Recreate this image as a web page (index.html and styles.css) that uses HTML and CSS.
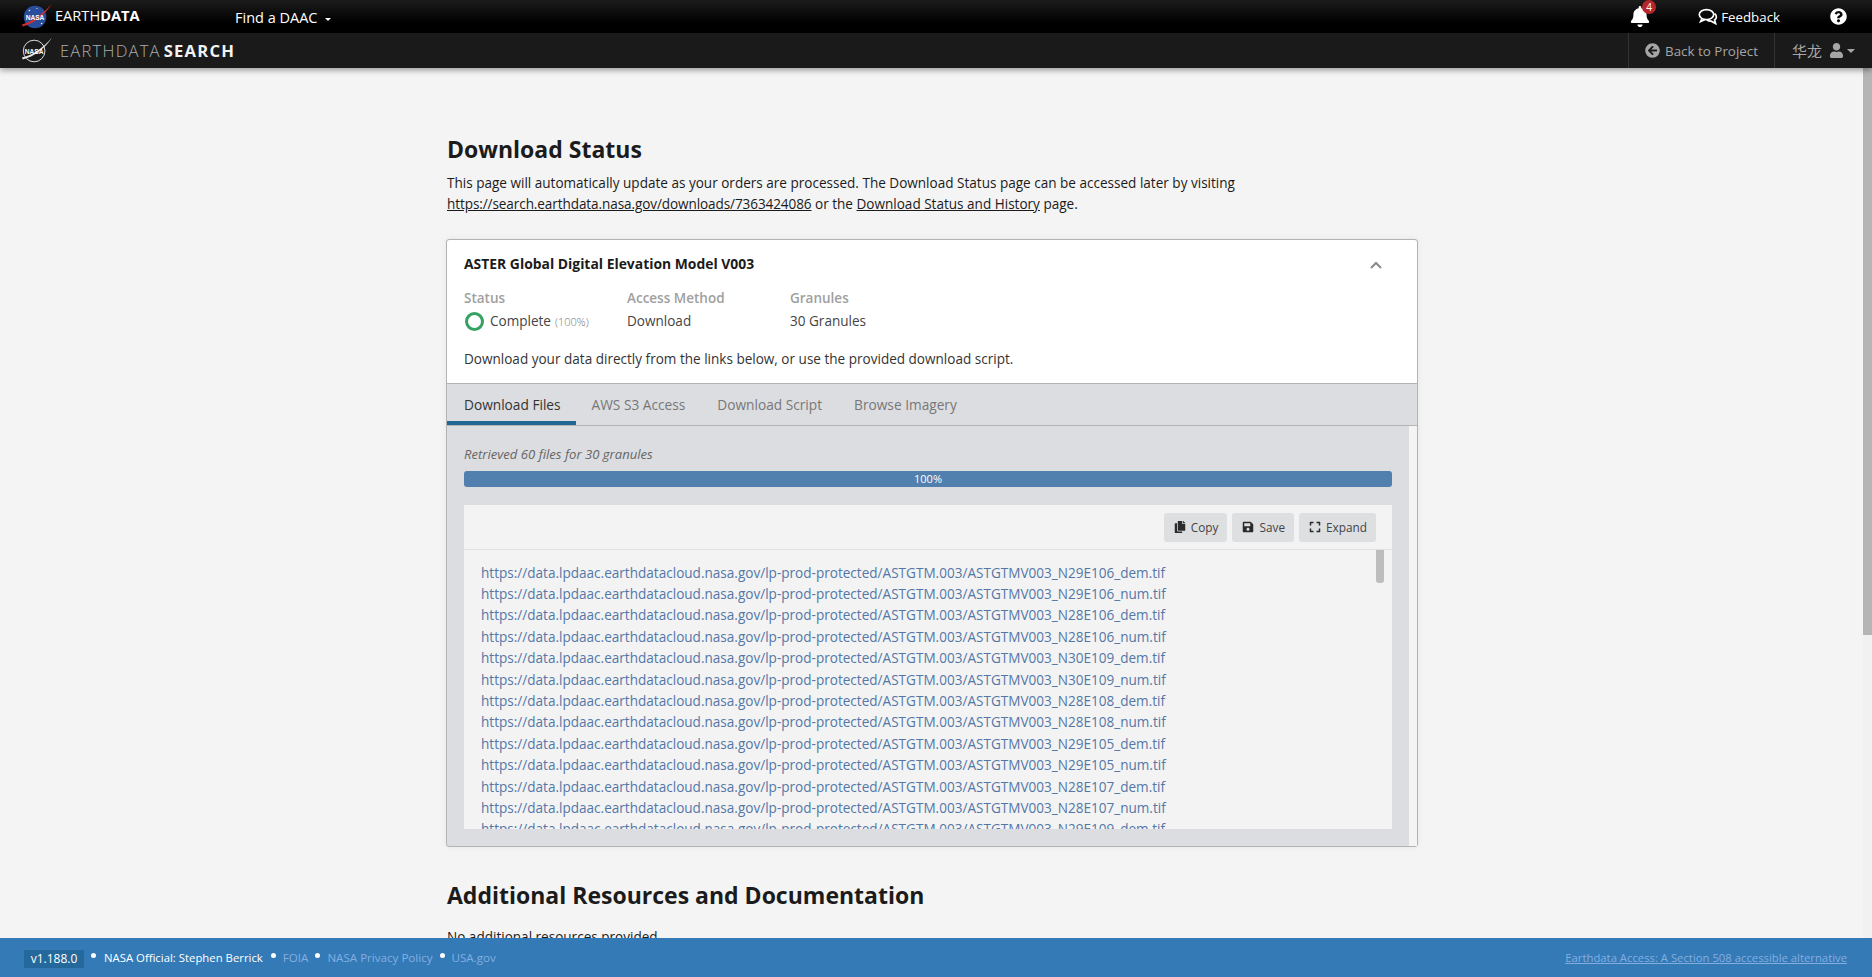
FILE: index.html
```html
<!DOCTYPE html>
<html lang="en">
<head>
    <meta charset="UTF-8">
    <meta name="viewport" content="width=device-width, initial-scale=1.0">
    <title>Earthdata Search - Download Status</title>
    <link rel="stylesheet" href="styles.css">
</head>
<body>
    <header class="topbar">
        <a class="brand">
            <svg class="nasa-logo" viewBox="0 0 40 34" aria-hidden="true">
                <circle cx="19" cy="17" r="12" fill="#2a4d9b"/>
                <path d="M5 25 C16 22 27 14 37 3 C29 15 18 24 6 27 Z" fill="#d03030"/>
                <circle cx="13" cy="10" r="0.8" fill="#fff"/>
                <circle cx="26" cy="24" r="0.8" fill="#fff"/>
                <circle cx="21" cy="8" r="0.6" fill="#fff"/>
                <text x="19" y="20" class="nasa-word">NASA</text>
            </svg>
            <span class="brand-name">EARTH<b>DATA</b></span>
        </a>
        <a class="daac">Find a DAAC <i class="daac-caret"></i></a>
        <div class="topbar-right">
            <a class="bell">
                <svg class="bell-icon" viewBox="0 0 448 512"><path d="M224 512c35.32 0 63.97-28.65 63.97-64H160.03c0 35.35 28.65 64 63.97 64zm215.39-149.71c-19.32-20.76-55.47-51.99-55.47-154.29 0-77.7-54.48-139.9-127.94-155.16V32c0-17.67-14.32-32-31.98-32s-31.98 14.33-31.98 32v20.84C118.56 68.1 64.08 130.3 64.08 208c0 102.3-36.15 133.53-55.47 154.29-6 6.45-8.66 14.16-8.61 21.71.11 16.4 12.98 32 32.1 32h383.8c19.12 0 32-15.6 32.1-32 .05-7.55-2.61-15.27-8.61-21.71z"/></svg>
                <span class="bell-count">4</span>
            </a>
            <a class="feedback">
                <svg class="feedback-icon" viewBox="0 0 20 18" fill="none" stroke="#fff" stroke-width="1.7"><ellipse cx="8.5" cy="6.6" rx="7.2" ry="5"/><path d="M4 10.5 L2.6 13.6 L7.2 11.5"/><path d="M16.5 5.5 C19 7.5 19 10.5 16.6 12 L17.6 15.6 L13.2 13.2 C11.5 13.2 10 12.8 9 12"/></svg>
                Feedback
            </a>
            <svg class="help-icon" viewBox="0 0 512 512"><path d="M504 256c0 136.997-111.043 248-248 248S8 392.997 8 256C8 119.083 119.043 8 256 8s248 111.083 248 248zM262.655 90c-54.497 0-89.255 22.957-116.549 63.758-3.536 5.286-2.353 12.415 2.715 16.258l34.699 26.31c5.205 3.947 12.621 3.008 16.665-2.122 17.864-22.658 30.113-35.797 57.303-35.797 20.429 0 45.698 13.148 45.698 32.958 0 14.976-12.363 22.667-32.534 33.976C247.128 238.528 216 254.941 216 296v4c0 6.627 5.373 12 12 12h56c6.627 0 12-5.373 12-12v-1.333c0-28.462 83.186-29.647 83.186-106.667 0-58.002-60.165-102-116.531-102zM256 338c-25.365 0-46 20.635-46 46 0 25.364 20.635 46 46 46s46-20.636 46-46c0-25.365-20.635-46-46-46z"/></svg>
        </div>
    </header>

    <nav class="appbar">
        <a class="app-brand">
            <svg class="nasa-outline" viewBox="0 0 40 34" aria-hidden="true" fill="none" stroke="#e8e8e8">
                <circle cx="18" cy="17" r="11.5" stroke-width="1"/>
                <path d="M5 24 C16 22 27 14 37 3 C29 15 18 23 6 26 Z" fill="#e8e8e8" stroke="none"/>
                <text x="18" y="20" class="nasa-word">NASA</text>
            </svg>
            <span class="app-name">EARTHDATA<b>SEARCH</b></span>
        </a>
        <div class="appbar-right">
            <a class="back-link">
                <svg class="back-icon" viewBox="0 0 512 512"><path d="M256 504C119 504 8 393 8 256S119 8 256 8s248 111 248 248-111 248-248 248zm28.9-143.6L209.4 288H392c13.3 0 24-10.7 24-24v-16c0-13.3-10.7-24-24-24H209.4l75.5-72.4c9.7-9.3 9.9-24.8.4-34.3l-11-10.9c-9.4-9.4-24.6-9.4-33.9 0L107.7 239c-9.4 9.4-9.4 24.6 0 33.9l132.7 132.7c9.4 9.4 24.6 9.4 33.9 0l11-10.9c9.5-9.5 9.3-25-.4-34.3z"/></svg>
                Back to Project
            </a>
            <a class="user-menu">
                华龙
                <svg class="user-icon" viewBox="0 0 448 512"><path d="M224 256c70.7 0 128-57.3 128-128S294.7 0 224 0 96 57.3 96 128s57.3 128 128 128zm89.6 32h-16.7c-22.2 10.2-46.9 16-72.9 16s-50.6-5.8-72.9-16h-16.7C60.2 288 0 348.2 0 422.4V464c0 26.5 21.5 48 48 48h352c26.5 0 48-21.5 48-48v-41.6c0-74.2-60.2-134.4-134.4-134.4z"/></svg>
                <i class="user-caret"></i>
            </a>
        </div>
    </nav>

    <div class="page">
        <main class="content">
            <h1>Download Status</h1>
            <p class="intro">This page will automatically update as your orders are processed. The Download Status page can be accessed later by visiting<br><a class="page-url">https://search.earthdata.nasa.gov/downloads/7363424086</a> or the <a>Download Status and History</a> page.</p>

            <section class="order">
                <div class="order-head">
                    <div class="order-title">
                        <h2>ASTER Global Digital Elevation Model V003</h2>
                        <svg class="chevron" viewBox="0 0 12 8" fill="none" stroke="#8a8a8a" stroke-width="2"><path d="M1 7 L6 2 L11 7"/></svg>
                    </div>
                    <div class="order-meta">
                        <div class="meta-col">
                            <span class="meta-label">Status</span>
                            <span class="meta-value"><i class="status-ring"></i>Complete <small>(100%)</small></span>
                        </div>
                        <div class="meta-col">
                            <span class="meta-label">Access Method</span>
                            <span class="meta-value">Download</span>
                        </div>
                        <div class="meta-col">
                            <span class="meta-label">Granules</span>
                            <span class="meta-value">30 Granules</span>
                        </div>
                    </div>
                    <p class="order-note">Download your data directly from the links below, or use the provided download script.</p>
                </div>

                <div class="tabs">
                    <a class="tab active">Download Files</a>
                    <a class="tab">AWS S3 Access</a>
                    <a class="tab">Download Script</a>
                    <a class="tab">Browse Imagery</a>
                </div>

                <div class="tab-body">
                    <div class="tab-inner">
                        <p class="retrieved">Retrieved 60 files for 30 granules</p>
                        <div class="progress">100%</div>
                        <div class="links-panel">
                            <div class="links-toolbar">
                                <button class="tool-btn">
                                    <svg viewBox="0 0 448 512"><path d="M320 448v40c0 13.255-10.745 24-24 24H24c-13.255 0-24-10.745-24-24V120c0-13.255 10.745-24 24-24h72v296c0 30.879 25.121 56 56 56h168zm0-344V0H152c-13.255 0-24 10.745-24 24v368c0 13.255 10.745 24 24 24h272c13.255 0 24-10.745 24-24V128H344c-13.2 0-24-10.8-24-24zm120.971-31.029L375.029 7.029A24 24 0 0 0 358.059 0H352v96h96v-6.059a24 24 0 0 0-7.029-16.97z"/></svg>
                                    Copy
                                </button>
                                <button class="tool-btn">
                                    <svg viewBox="0 0 448 512"><path d="M433.941 129.941l-83.882-83.882A48 48 0 0 0 316.118 32H48C21.49 32 0 53.49 0 80v352c0 26.51 21.49 48 48 48h352c26.51 0 48-21.49 48-48V163.882a48 48 0 0 0-14.059-33.941zM224 416c-35.346 0-64-28.654-64-64 0-35.346 28.654-64 64-64s64 28.654 64 64c0 35.346-28.654 64-64 64zm96-304.52V212c0 6.627-5.373 12-12 12H76c-6.627 0-12-5.373-12-12V108c0-6.627 5.373-12 12-12h228.52c3.183 0 6.235 1.264 8.485 3.515l3.48 3.48A11.996 11.996 0 0 1 320 111.48z"/></svg>
                                    Save
                                </button>
                                <button class="tool-btn">
                                    <svg viewBox="0 0 448 512"><path d="M0 180V56c0-13.3 10.7-24 24-24h124c6.6 0 12 5.4 12 12v40c0 6.6-5.4 12-12 12H64v84c0 6.6-5.4 12-12 12H12c-6.6 0-12-5.4-12-12zM288 44v40c0 6.6 5.4 12 12 12h84v84c0 6.6 5.4 12 12 12h40c6.6 0 12-5.4 12-12V56c0-13.3-10.7-24-24-24H300c-6.6 0-12 5.4-12 12zm148 276h-40c-6.6 0-12 5.4-12 12v84h-84c-6.6 0-12 5.4-12 12v40c0 6.6 5.4 12 12 12h124c13.3 0 24-10.7 24-24V332c0-6.6-5.4-12-12-12zM160 468v-40c0-6.6-5.4-12-12-12H64v-84c0-6.6-5.4-12-12-12H12c-6.6 0-12 5.4-12 12v124c0 13.3 10.7 24 24 24h124c6.6 0 12-5.4 12-12z"/></svg>
                                    Expand
                                </button>
                            </div>
                            <div class="links-view">
                                <ul class="links-list">
                                    <li>https://data.lpdaac.earthdatacloud.nasa.gov/lp-prod-protected/ASTGTM.003/ASTGTMV003_N29E106_dem.tif</li>
                                    <li>https://data.lpdaac.earthdatacloud.nasa.gov/lp-prod-protected/ASTGTM.003/ASTGTMV003_N29E106_num.tif</li>
                                    <li>https://data.lpdaac.earthdatacloud.nasa.gov/lp-prod-protected/ASTGTM.003/ASTGTMV003_N28E106_dem.tif</li>
                                    <li>https://data.lpdaac.earthdatacloud.nasa.gov/lp-prod-protected/ASTGTM.003/ASTGTMV003_N28E106_num.tif</li>
                                    <li>https://data.lpdaac.earthdatacloud.nasa.gov/lp-prod-protected/ASTGTM.003/ASTGTMV003_N30E109_dem.tif</li>
                                    <li>https://data.lpdaac.earthdatacloud.nasa.gov/lp-prod-protected/ASTGTM.003/ASTGTMV003_N30E109_num.tif</li>
                                    <li>https://data.lpdaac.earthdatacloud.nasa.gov/lp-prod-protected/ASTGTM.003/ASTGTMV003_N28E108_dem.tif</li>
                                    <li>https://data.lpdaac.earthdatacloud.nasa.gov/lp-prod-protected/ASTGTM.003/ASTGTMV003_N28E108_num.tif</li>
                                    <li>https://data.lpdaac.earthdatacloud.nasa.gov/lp-prod-protected/ASTGTM.003/ASTGTMV003_N29E105_dem.tif</li>
                                    <li>https://data.lpdaac.earthdatacloud.nasa.gov/lp-prod-protected/ASTGTM.003/ASTGTMV003_N29E105_num.tif</li>
                                    <li>https://data.lpdaac.earthdatacloud.nasa.gov/lp-prod-protected/ASTGTM.003/ASTGTMV003_N28E107_dem.tif</li>
                                    <li>https://data.lpdaac.earthdatacloud.nasa.gov/lp-prod-protected/ASTGTM.003/ASTGTMV003_N28E107_num.tif</li>
                                    <li>https://data.lpdaac.earthdatacloud.nasa.gov/lp-prod-protected/ASTGTM.003/ASTGTMV003_N29E109_dem.tif</li>
                                </ul>
                                <div class="links-thumb"></div>
                            </div>
                        </div>
                    </div>
                </div>
            </section>

            <h1 class="resources-title">Additional Resources and Documentation</h1>
            <p class="resources-text">No additional resources provided</p>
        </main>
        <div class="page-scroll"><div class="page-thumb"></div></div>
    </div>

    <footer class="footer">
        <span class="version">v1.188.0</span>
        <span class="dot"></span>
        <span class="official">NASA Official: Stephen Berrick</span>
        <span class="dot"></span>
        <a>FOIA</a>
        <span class="dot"></span>
        <a>NASA Privacy Policy</a>
        <span class="dot"></span>
        <a>USA.gov</a>
        <a class="access-link">Earthdata Access: A Section 508 accessible alternative</a>
    </footer>
</body>
</html>
```

FILE: styles.css
```css
html, body {
    height: 100%;
}
body {
    margin: 0;
    display: flex;
    flex-direction: column;
    height: 100vh;
    overflow: hidden;
    font-family: 'Open Sans', 'Noto Sans CJK SC', sans-serif;
    font-size: 13.55px;
    color: #1b1b1b;
    background-color: #f4f4f4;
}
a {
    color: inherit;
}

/* top bars */
.topbar {
    flex: none;
    height: 33px;
    display: flex;
    align-items: center;
    background: linear-gradient(#1c1c1c, #000 70%);
    color: #fff;
}
.brand {
    display: flex;
    align-items: center;
    width: 218px;
    padding-left: 17px;
}
.nasa-logo {
    width: 38px;
    height: 32px;
}
.nasa-word {
    font-family: 'Liberation Sans', sans-serif;
    font-size: 7px;
    font-weight: bold;
    fill: #fff;
    stroke: none;
    text-anchor: middle;
}
.brand-name {
    font-size: 14.6px;
    line-height: 1;
    margin-top: -2px;
}
.brand-name b {
    font-weight: 700;
}
.daac {
    font-size: 14.5px;
    margin-top: 2px;
}
.daac-caret {
    display: inline-block;
    margin-left: 4px;
    vertical-align: 2px;
    border: 3px solid transparent;
    border-top-color: #fff;
    border-bottom: 0;
}
.topbar-right {
    margin-left: auto;
    display: flex;
    align-items: center;
}
.bell {
    position: relative;
    display: flex;
    margin-right: 47px;
}
.bell-icon {
    width: 20px;
    height: 21px;
    fill: #fff;
}
.bell-count {
    position: absolute;
    top: -6px;
    left: 12px;
    width: 14px;
    height: 14px;
    border-radius: 50%;
    background-color: #b5272c;
    font-size: 10px;
    line-height: 14px;
    text-align: center;
}
.feedback {
    display: flex;
    align-items: center;
    font-size: 13.3px;
    margin-right: 50px;
}
.feedback-icon {
    width: 22px;
    height: 18px;
    margin-right: 2px;
}
.help-icon {
    width: 17px;
    height: 17px;
    fill: #fff;
    margin-right: 25px;
}

.appbar {
    flex: none;
    height: 35px;
    display: flex;
    align-items: stretch;
    background-color: #1a1a1a;
    box-shadow: 0 2px 6px rgba(0, 0, 0, 0.4);
    position: relative;
    z-index: 2;
}
.app-brand {
    display: flex;
    align-items: center;
    padding-left: 17px;
}
.nasa-outline {
    width: 38px;
    height: 32px;
    margin-right: 5px;
}
.app-name {
    font-size: 16.6px;
    letter-spacing: 1.2px;
    color: #a8aeae;
    font-weight: 300;
}
.app-name b {
    margin-left: 3px;
    color: #f2f2f2;
    font-weight: 700;
}
.appbar-right {
    margin-left: auto;
    display: flex;
    color: #a6a6a6;
    font-size: 13.4px;
}
.back-link {
    display: flex;
    align-items: center;
    box-sizing: border-box;
    width: 147px;
    padding-left: 16px;
    border-left: 1px solid #333;
    border-right: 1px solid #333;
}
.back-icon {
    width: 15px;
    height: 15px;
    fill: #a6a6a6;
    margin-right: 5px;
}
.user-menu {
    display: flex;
    align-items: center;
    width: 65px;
    padding-left: 17px;
    margin-right: 15px;
    font-size: 15px;
}
.user-icon {
    flex: none;
    width: 13px;
    height: 15px;
    fill: #a6a6a6;
    margin: 0 4px 0 8px;
}
.user-caret {
    flex: none;
    border: 4px solid transparent;
    border-top-color: #a6a6a6;
    border-bottom: 0;
}

/* page */
.page {
    flex: 1;
    min-height: 0;
    display: flex;
    overflow: hidden;
}
.content {
    flex: 1;
    min-width: 0;
    padding: 68px 0 0 447px;
}
h1 {
    margin: 0;
    font-size: 23px;
    line-height: 1.2;
    font-weight: 700;
    color: #1b1b1b;
}
.intro {
    margin: 9px 0 0;
    line-height: 21px;
}
.intro a {
    text-decoration: underline;
}
.intro .page-url {
    letter-spacing: -0.09px;
}
.page-scroll {
    flex: none;
    width: 9px;
    background-color: #f1f1f1;
}
.page-thumb {
    height: 567px;
    background-color: #b5b5b5;
}

/* order card */
.order {
    width: 970px;
    margin: 24px 0 0 -1px;
    border: 1px solid #b3b3b3;
    border-radius: 3px;
    box-shadow: 0 0 6px rgba(0, 0, 0, 0.06);
    background-color: #dcdde0;
}
.order-head {
    height: 143px;
    padding: 0 17px;
    background-color: #fff;
    border-radius: 3px 3px 0 0;
    border-bottom: 1px solid #b3b3b3;
}
.order-title {
    display: flex;
    justify-content: space-between;
    align-items: center;
    padding: 14px 18px 0 0;
}
.order-title h2 {
    margin: 0;
    font-size: 13.9px;
    line-height: 20px;
    font-weight: 700;
}
.chevron {
    width: 12px;
    height: 8px;
    margin-top: 3px;
}
.order-meta {
    display: flex;
    margin-top: 14px;
}
.meta-col {
    display: flex;
    flex-direction: column;
    width: 163px;
}
.meta-label {
    font-size: 13.5px;
    line-height: 21px;
    font-weight: 600;
    color: #a0a0a0;
}
.meta-value {
    display: flex;
    align-items: center;
    height: 25px;
    color: #444;
}
.meta-value small {
    font-size: 11px;
    font-weight: 300;
    color: #777;
    margin-left: 4px;
}
.status-ring {
    width: 13px;
    height: 13px;
    margin: 0 6px 0 1px;
    border: 3px solid #34a263;
    border-radius: 50%;
}
.order-note {
    margin: 15px 0 0;
    line-height: 20px;
    color: #333;
}

.tabs {
    display: flex;
    height: 41px;
    border-bottom: 1px solid #b3b3b3;
}
.tab {
    box-sizing: border-box;
    height: 41px;
    padding: 11px 16px 0;
    font-size: 13.7px;
    color: #777;
}
.tab.active {
    padding-left: 17px;
    padding-right: 15px;
    color: #333;
    border-bottom: 4px solid #206793;
}
.tab-body {
    border-right: 8px solid #f4f4f4;
    padding: 18px 16px 17px 17px;
    overflow: hidden;
}
.tab-inner {
    margin-right: 1px;
}
.retrieved {
    margin: 0;
    font-size: 13.1px;
    line-height: 20px;
    font-style: italic;
    color: #666;
}
.progress {
    margin-top: 7px;
    height: 16px;
    border-radius: 3px;
    background-color: #5280ae;
    color: #fff;
    font-size: 11px;
    line-height: 16px;
    text-align: center;
}
.links-panel {
    margin-top: 18px;
    height: 324px;
    overflow: hidden;
    background-color: #f3f3f3;
}
.links-toolbar {
    display: flex;
    justify-content: flex-end;
    gap: 5px;
    height: 45px;
    padding: 8px 16px 0 0;
    box-sizing: border-box;
    border-bottom: 1px solid #e0e0e0;
}
.tool-btn {
    display: flex;
    align-items: center;
    height: 29px;
    padding: 0 9px 0 10px;
    border: 0;
    border-radius: 3px;
    background-color: #dedfe1;
    font-family: inherit;
    font-size: 11.8px;
    color: #444;
}
.tool-btn svg {
    width: 12px;
    height: 12px;
    margin-right: 5px;
    fill: #2b2b2b;
}
.links-view {
    display: flex;
    height: 279px;
    overflow: hidden;
}
.links-list {
    flex: 1;
    margin: 0;
    padding: 12px 0 0 17px;
    list-style: none;
    font-size: 13.57px;
    line-height: 21.4px;
    color: #5377a7;
}
.links-thumb {
    flex: none;
    width: 8px;
    height: 33px;
    margin-right: 8px;
    border-radius: 0 0 3px 3px;
    background-color: #bdbdbd;
}

.resources-title {
    margin-top: 35px;
}
.resources-text {
    margin: 18px 0 0;
    line-height: 21px;
}

/* footer */
.footer {
    flex: none;
    height: 39px;
    display: flex;
    align-items: center;
    gap: 7px;
    padding: 0 25px 0 24px;
    background-color: #337ab7;
    font-size: 11.6px;
    color: #85aee0;
    position: relative;
    z-index: 2;
}
.version {
    width: 60px;
    height: 18px;
    margin-top: 2px;
    background-color: #25699c;
    color: #fff;
    font-size: 12px;
    line-height: 18px;
    text-align: center;
}
.official {
    margin: 0 1px;
    font-size: 11.35px;
    color: #fff;
}
.dot {
    width: 5px;
    height: 5px;
    margin-top: -4px;
    border-radius: 50%;
    background-color: #fff;
}
.access-link {
    margin-left: auto;
    font-size: 11.3px;
    text-decoration: underline;
}
```
